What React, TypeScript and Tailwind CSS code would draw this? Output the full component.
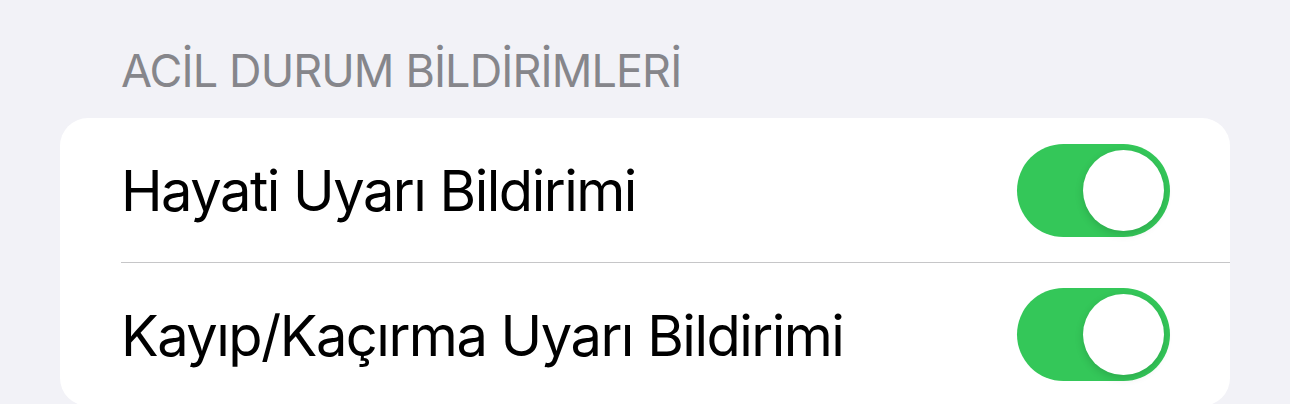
import React, { useState } from "react";

function Toggle({ on, onChange }: { on: boolean; onChange: () => void }) {
    return (
        <button
            type="button"
            onClick={onChange}
            className={`flex h-[93px] w-[153px] shrink-0 items-center rounded-full p-[6px] transition-colors ${on ? "justify-end bg-[#34c759]" : "justify-start bg-[#e9e9ea]"}`}
        >
            <span className="block h-[81px] w-[81px] rounded-full bg-white shadow-[0_3px_8px_rgba(0,0,0,0.15)]" />
        </button>
    );
}

const rows = [
    { key: "hayati", label: "Hayati Uyarı Bildirimi" },
    { key: "kayip", label: "Kayıp/Kaçırma Uyarı Bildirimi" },
];

export default function App() {
    const [state, setState] = useState<Record<string, boolean>>({ hayati: true, kayip: true });

    return (
        <div className="h-[404px] w-[1290px] overflow-hidden bg-[#f2f2f7] px-[60px] font-['Inter',sans-serif]">
            <div className="pl-[61px] pt-[42px] pb-[19px] text-[45px] leading-[57px] tracking-[-0.9px] text-[#86868b]">ACİL DURUM BİLDİRİMLERİ</div>
            <div className="rounded-[28px] bg-white">
                {rows.map((row, i) => (
                    <div key={row.key} className="flex h-[144px] items-center pl-[61px]">
                        <div className={`flex h-full flex-1 items-center pr-[60px] ${i > 0 ? "border-t border-[#c6c6c8]" : ""}`}>
                            <span className="flex-1 pt-[2px] text-[56px] leading-none tracking-[-1.5px] text-black">{row.label}</span>
                            <Toggle
                                on={state[row.key]}
                                onChange={() => setState(s => ({ ...s, [row.key]: !s[row.key] }))}
                            />
                        </div>
                    </div>
                ))}
            </div>
        </div>
    );
}
